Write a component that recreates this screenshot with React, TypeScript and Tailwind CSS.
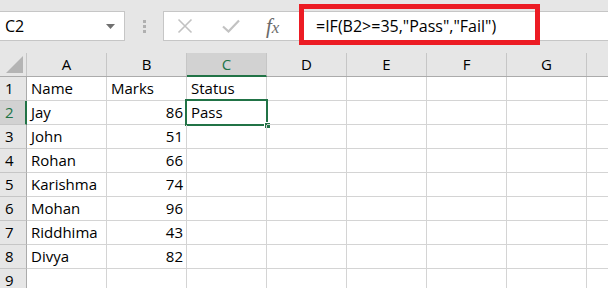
import React from "react";

const cols = ["A", "B", "C", "D", "E", "F", "G", "H"];
const data: [string, string, string][] = [
  ["Name", "Marks", "Status"],
  ["Jay", "86", "Pass"],
  ["John", "51", ""],
  ["Rohan", "66", ""],
  ["Karishma", "74", ""],
  ["Mohan", "96", ""],
  ["Riddhima", "43", ""],
  ["Divya", "82", ""],
  ["", "", ""],
];

const isNum = (s: string) => /^\d+$/.test(s);

export default function App() {
  return (
    <div
      className="w-[608px] h-[288px] overflow-hidden bg-white text-black flex flex-col"
      style={{ fontFamily: "'Open Sans', sans-serif" }}
    >
      {/* top bar */}
      <div className="h-[53px] shrink-0 bg-[#e6e6e6] relative flex items-start pt-[11px]">
        <div className="w-[125px] h-[30px] bg-white border border-[#c6c6c6] border-l-0 flex items-center justify-between pl-[5px] pr-[9px]">
          <span className="text-[16px] leading-none">C2</span>
          <svg width="9" height="5" viewBox="0 0 9 5">
            <path d="M0 0 L9 0 L4.5 5 Z" fill="#707070" />
          </svg>
        </div>
        <div className="w-[38px] h-[30px] flex flex-col items-center justify-center gap-[2px]">
          <div className="w-[3px] h-[3px] bg-[#b0b0b0]" />
          <div className="w-[3px] h-[3px] bg-[#b0b0b0]" />
          <div className="w-[3px] h-[3px] bg-[#b0b0b0]" />
        </div>
        <div className="flex-1 h-[30px] bg-white border border-[#c6c6c6] border-r-0 flex items-center">
          <div className="w-[135px] h-full flex items-center">
            <svg width="16" height="16" viewBox="0 0 16 16" className="ml-[13px]">
              <path d="M1.5 1.5 L14.5 14.5 M14.5 1.5 L1.5 14.5" stroke="#c2c2c2" strokeWidth="1.6" fill="none" />
            </svg>
            <svg width="18" height="14" viewBox="0 0 18 14" className="ml-[29px]">
              <path d="M1 7.5 L6.5 12.5 L17 1.5" stroke="#c2c2c2" strokeWidth="2.2" fill="none" />
            </svg>
            <span
              className="ml-[26px] text-[21px] italic text-[#6a6a6a] leading-none"
              style={{ fontFamily: "'Liberation Serif', serif" }}
            >
              f<span className="text-[17px]">x</span>
            </span>
          </div>
          <span className="ml-[17px] text-[16px] leading-none">=IF(B2&gt;=35,"Pass","Fail")</span>
        </div>
        <div className="absolute left-[299px] top-[4px] w-[241px] h-[41px] border-[5px] border-[#ec1c24]" />
      </div>

      {/* column header */}
      <div className="h-[24px] shrink-0 flex bg-[#e6e6e6] border-b border-[#ababab]">
        <div className="w-[27px] shrink-0 border-r border-[#c6c6c6] relative">
          <svg width="17" height="17" viewBox="0 0 17 17" className="absolute left-[6px] top-[3px]">
            <path d="M17 0 L17 17 L0 17 Z" fill="#b4b4b4" />
          </svg>
        </div>
        {cols.map((c) => (
          <div
            key={c}
            className={
              c === "C"
                ? "w-[80px] shrink-0 border-r border-[#c6c6c6] bg-[#d2d2d2] border-b-2 border-b-[#217346] -mb-px flex items-center justify-center text-[15px] text-[#217346]"
                : "w-[80px] shrink-0 border-r border-[#c6c6c6] flex items-center justify-center text-[15px]"
            }
          >
            {c === "H" ? "" : c}
          </div>
        ))}
      </div>

      {/* rows */}
      {data.map((r, i) => (
        <div key={i} className="h-[24px] shrink-0 flex">
          <div
            className={
              i === 1
                ? "w-[27px] shrink-0 bg-[#d2d2d2] border-r-2 border-r-[#217346] border-b border-b-[#c6c6c6] text-[#217346] text-[15px] flex items-center pl-[5px]"
                : "w-[27px] shrink-0 bg-[#e6e6e6] border-r border-[#ababab] border-b border-b-[#c6c6c6] text-[15px] flex items-center pl-[5px]"
            }
          >
            {i + 1}
          </div>
          {cols.map((c, j) => {
            const v = j < 3 ? r[j] : "";
            return (
              <div
                key={c}
                className={
                  isNum(v)
                    ? "w-[80px] shrink-0 border-r border-b border-[#d4d4d4] text-[15px] flex items-center justify-end pr-[3px] relative"
                    : "w-[80px] shrink-0 border-r border-b border-[#d4d4d4] text-[15px] flex items-center pl-[4px] relative"
                }
              >
                {v}
                {i === 1 && j === 2 && (
                  <div className="absolute left-[-2px] top-[-2px] w-[83px] h-[27px] border-2 border-[#217346]">
                    <div className="absolute right-[-5px] bottom-[-5px] w-[7px] h-[7px] bg-[#217346] border border-white" />
                  </div>
                )}
              </div>
            );
          })}
        </div>
      ))}
    </div>
  );
}
